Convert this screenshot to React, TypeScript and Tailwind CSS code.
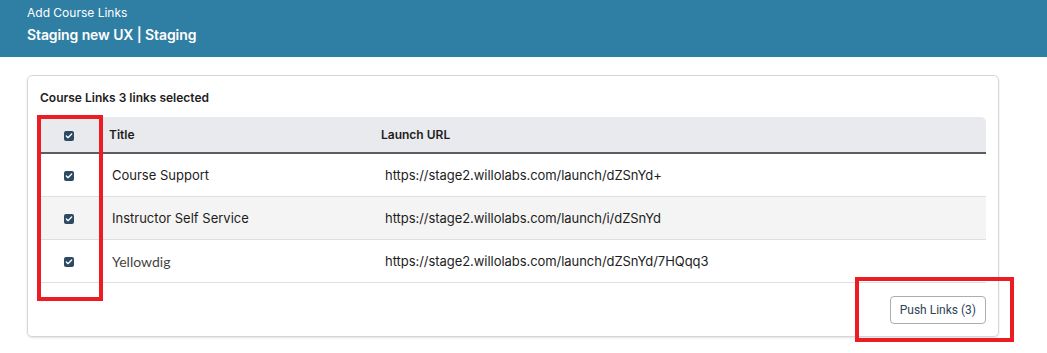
import { Check } from "lucide-react";

const links = [
  { title: "Course Support", url: "https://stage2.willolabs.com/launch/dZSnYd+", lato: false },
  { title: "Instructor Self Service", url: "https://stage2.willolabs.com/launch/i/dZSnYd", lato: false },
  { title: "Yellowdig", url: "https://stage2.willolabs.com/launch/dZSnYd/7HQqq3", lato: true },
];

function Box() {
  return (
    <span className="inline-flex h-[10px] w-[10px] items-center justify-center rounded-[2px] bg-[#2c4a64]">
      <Check size={8} strokeWidth={4} className="text-white" />
    </span>
  );
}

export default function App() {
  return (
    <div className="relative h-[353px] w-[1047px] overflow-hidden bg-white font-['Inter',sans-serif] text-[#1d1d1d]">
      {/* page header */}
      <div className="flex h-[57px] flex-col bg-[#2f7ea3] px-[27px] pt-[5px] text-white">
        <span className="text-[12px] leading-[16px]">Add Course Links</span>
        <span className="mt-[5px] text-[14px] font-semibold leading-[18px] tracking-[-0.1px]">Staging new UX | Staging</span>
      </div>

      <div className="pl-[27px] pr-[48px] pt-[18px]">
        <div className="h-[262px] rounded-[5px] border border-[#d6d6d6] shadow-[0_1px_2px_rgba(0,0,0,0.12)]">
          <div className="px-[12px] pt-[14px] text-[12px] font-semibold leading-[16px]">
            Course Links 3 links selected
          </div>

          <table className="ml-[10px] mt-[11px] w-[948px] border-collapse text-[13px]">
            <thead>
              <tr className="h-[36px] bg-[#e9eaee] border-b-2 border-[#5a5d61]">
                <th className="w-[62px] rounded-tl-[5px] text-center align-middle">
                  <span className="relative top-[1px] inline-flex"><Box /></span>
                </th>
                <th className="w-[271px] pl-[9px] text-left text-[12px] font-semibold">Title</th>
                <th className="rounded-tr-[5px] pl-[10px] text-left text-[12px] font-semibold">Launch URL</th>
              </tr>
            </thead>
            <tbody>
              {links.map((l, i) => (
                <tr key={l.title} className={`h-[43px] border-b border-[#dedfe2] ${i === 1 ? "bg-[#f4f4f4]" : "bg-white"}`}>
                  <td className="text-center align-middle">
                    <span className="relative top-[1px] inline-flex"><Box /></span>
                  </td>
                  <td className={`pl-[12px] pt-[2px] ${l.lato ? "font-['Lato',sans-serif] text-[14px] text-[#444]" : ""}`}>{l.title}</td>
                  <td className="pl-[14px] pt-[2px] tracking-[-0.05px]">{l.url}</td>
                </tr>
              ))}
            </tbody>
          </table>

          <div className="flex justify-end pr-[12px] pt-[13px]">
            <button className="h-[28px] rounded-[4px] border border-[#a7aeb5] px-[9px] font-['Roboto',sans-serif] text-[12px] text-[#2f4558]">
              Push Links (3)
            </button>
          </div>
        </div>
      </div>

      {/* annotation boxes */}
      <div className="pointer-events-none absolute left-[37px] top-[115px] h-[186px] w-[66px] border-4 border-[#ec1c24]" />
      <div className="pointer-events-none absolute left-[855px] top-[277px] h-[65px] w-[159px] border-4 border-[#ec1c24]" />
    </div>
  );
}
